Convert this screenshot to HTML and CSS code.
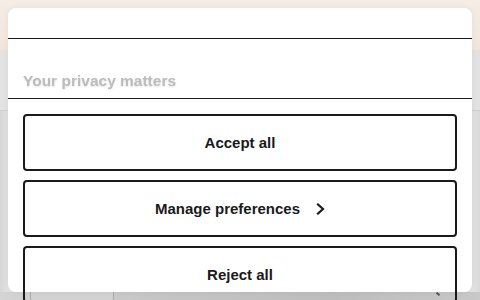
FILE: index.html
```html
<!DOCTYPE html>
<html lang="en">
<head>
<meta charset="utf-8">
<title>Your privacy matters</title>
<link rel="stylesheet" href="styles.css">
</head>
<body>
<div class="backdrop">
  <div class="bg-top"></div>
  <div class="bg-mid"></div>
  <div class="bg-low"></div>
  <div class="bg-bottom">
    <div class="bg-pill"></div>
    <div class="bg-mark"></div>
  </div>
</div>
<div class="modal" role="dialog" aria-label="Your privacy matters">
  <div class="modal-head"></div>
  <div class="modal-title-row">
    <h2 class="modal-title">Your privacy matters</h2>
  </div>
  <div class="modal-actions">
    <button class="btn" type="button">Accept all</button>
    <button class="btn" type="button"><span class="btn-label">Manage preferences<svg class="chev" width="9" height="12" viewBox="0 0 9 12" aria-hidden="true"><polyline points="2,1.5 7,6 2,10.5" fill="none" stroke="#1a1a1a" stroke-width="2.2" stroke-linecap="square" stroke-linejoin="miter"/></svg></span></button>
    <button class="btn" type="button">Reject all</button>
  </div>
</div>
</body>
</html>
```

FILE: styles.css
```css
html, body {
  margin: 0;
  padding: 0;
  width: 480px;
  height: 300px;
  overflow: hidden;
  font-family: "Liberation Sans", Arial, sans-serif;
}

.backdrop {
  position: absolute;
  inset: 0;
  display: flex;
  flex-direction: column;
}

.bg-top {
  height: 50px;
  background: linear-gradient(180deg, #f5ede6 0%, #f1e6dd 100%);
}

.bg-mid {
  height: 60px;
  background: linear-gradient(90deg, #e3e3e3 0%, #e9e9e9 50%, #e2e2e2 100%);
  border-bottom: 1px solid #cfcfcf;
}

.bg-low {
  flex: 1;
  background: linear-gradient(90deg, #d6d6d6 0%, #ececec 3%, #e6e6e6 50%, #e9e9e9 97%, #dadada 100%);
}

.bg-bottom {
  height: 8px;
  position: relative;
  background: linear-gradient(90deg, #d4d4d4 0%, #c6c6c6 30%, #bdbdbd 70%, #c8c8c8 100%);
}

.bg-pill {
  position: absolute;
  left: 30px;
  top: -6px;
  width: 82px;
  height: 16px;
  border: 1px solid #a9a9a9;
  border-radius: 6px;
  background: #d2d2d2;
}

.bg-mark {
  position: absolute;
  left: 436px;
  top: 1px;
  width: 4px;
  height: 2px;
  background: #555;
  transform: rotate(40deg);
}

.modal {
  position: absolute;
  top: 8px;
  left: 8px;
  width: 464px;
  height: 284px;
  background: #ffffff;
  border-radius: 8px;
  box-shadow: 0 0 6px rgba(0, 0, 0, 0.06);
  display: flex;
  flex-direction: column;
}

.modal-head {
  height: 30px;
  border-bottom: 1px solid #1a1a1a;
  flex: none;
}

.modal-title-row {
  height: 60px;
  flex: none;
  border-bottom: 1px solid #1a1a1a;
  display: flex;
  align-items: flex-end;
  padding: 0 15px 9px;
  box-sizing: border-box;
}

.modal-title {
  margin: 0;
  font-size: 15.5px;
  line-height: 17px;
  font-weight: bold;
  color: #bcbcbc;
  text-shadow: 0 1px 2px rgba(0, 0, 0, 0.12);
  filter: blur(0.5px);
}

.modal-actions {
  padding: 15px 15px 0;
  display: flex;
  flex-direction: column;
  gap: 9px;
}

.btn {
  height: 57px;
  flex: none;
  border: 2px solid #1a1a1a;
  border-radius: 4px;
  background: transparent;
  font-family: "Liberation Sans", Arial, sans-serif;
  font-size: 15px;
  font-weight: bold;
  color: #1a1a1a;
  display: flex;
  align-items: center;
  justify-content: center;
  padding: 0;
}

.btn-label {
  display: inline-flex;
  align-items: center;
  gap: 16px;
}

.chev {
  display: block;
}
```
